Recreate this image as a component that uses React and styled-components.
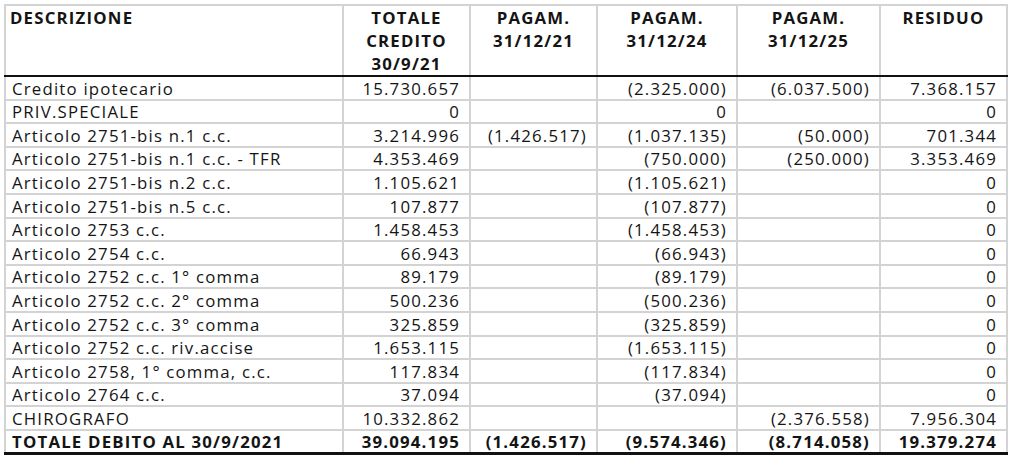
import React from 'react';
import styled, { createGlobalStyle } from 'styled-components';

const GlobalStyle = createGlobalStyle`
  html, body {
    margin: 0;
    padding: 0;
    background: #fff;
  }
  body {
    font-family: "Open Sans", "Liberation Sans", sans-serif;
    color: #141414;
  }
`;

const Page = styled.div`
  padding: 4px 0 0 4px;
`;

const Table = styled.table`
  border-collapse: collapse;
  table-layout: fixed;
  width: 1002px;
  font-size: 16.8px;
  letter-spacing: 1.2px;
`;

const HeadCell = styled.th`
  border: 2px solid #d3d3d3;
  border-bottom: 2px solid #111;
  vertical-align: top;
  text-align: ${p => (p.$left ? 'left' : 'center')};
  font-weight: 700;
  line-height: 23px;
  padding: 0 4px;
  height: 67px;
  box-sizing: border-box;
`;

const Cell = styled.td`
  border: 2px solid #d3d3d3;
  text-align: ${p => (p.$left ? 'left' : 'right')};
  vertical-align: bottom;
  padding: 0 9px 0 ${p => (p.$left ? '6px' : '2px')};
  height: 23.6px;
  line-height: 21px;
  box-sizing: border-box;
  white-space: nowrap;
`;

const TotalRow = styled.tr`
  & > td {
    font-weight: 700;
    border-top: 2px solid #111;
    border-bottom: 3px solid #111;
    height: 22px;
  }
`;

const columns = [
  { w: 338, label: ['DESCRIZIONE'], left: true },
  { w: 127, label: ['TOTALE', 'CREDITO', '30/9/21'] },
  { w: 127, label: ['PAGAM.', '31/12/21'] },
  { w: 140, label: ['PAGAM.', '31/12/24'] },
  { w: 143, label: ['PAGAM.', '31/12/25'] },
  { w: 127, label: ['RESIDUO'] },
];

const rows = [
  ['Credito ipotecario', '15.730.657', '', '(2.325.000)', '(6.037.500)', '7.368.157'],
  ['PRIV.SPECIALE', '0', '', '0', '', '0'],
  ['Articolo 2751-bis n.1 c.c.', '3.214.996', '(1.426.517)', '(1.037.135)', '(50.000)', '701.344'],
  ['Articolo 2751-bis n.1 c.c. - TFR', '4.353.469', '', '(750.000)', '(250.000)', '3.353.469'],
  ['Articolo 2751-bis n.2 c.c.', '1.105.621', '', '(1.105.621)', '', '0'],
  ['Articolo 2751-bis n.5 c.c.', '107.877', '', '(107.877)', '', '0'],
  ['Articolo 2753 c.c.', '1.458.453', '', '(1.458.453)', '', '0'],
  ['Articolo 2754 c.c.', '66.943', '', '(66.943)', '', '0'],
  ['Articolo 2752 c.c. 1° comma', '89.179', '', '(89.179)', '', '0'],
  ['Articolo 2752 c.c. 2° comma', '500.236', '', '(500.236)', '', '0'],
  ['Articolo 2752 c.c. 3° comma', '325.859', '', '(325.859)', '', '0'],
  ['Articolo 2752 c.c. riv.accise', '1.653.115', '', '(1.653.115)', '', '0'],
  ['Articolo 2758, 1° comma, c.c.', '117.834', '', '(117.834)', '', '0'],
  ['Articolo 2764 c.c.', '37.094', '', '(37.094)', '', '0'],
  ['CHIROGRAFO', '10.332.862', '', '', '(2.376.558)', '7.956.304'],
];

const total = ['TOTALE DEBITO AL 30/9/2021', '39.094.195', '(1.426.517)', '(9.574.346)', '(8.714.058)', '19.379.274'];

export default function App() {
  return (
    <Page>
      <GlobalStyle />
      <Table>
        <colgroup>
          {columns.map((c, i) => (
            <col key={i} style={{ width: c.w }} />
          ))}
        </colgroup>
        <thead>
          <tr>
            {columns.map((c, i) => (
              <HeadCell key={i} $left={c.left}>
                {c.label.map((l, j) => (
                  <div key={j}>{l}</div>
                ))}
              </HeadCell>
            ))}
          </tr>
        </thead>
        <tbody>
          {rows.map((r, i) => (
            <tr key={i}>
              {r.map((v, j) => (
                <Cell key={j} $left={j === 0}>{v}</Cell>
              ))}
            </tr>
          ))}
          <TotalRow>
            {total.map((v, j) => (
              <Cell key={j} $left={j === 0}>{v}</Cell>
            ))}
          </TotalRow>
        </tbody>
      </Table>
    </Page>
  );
}
